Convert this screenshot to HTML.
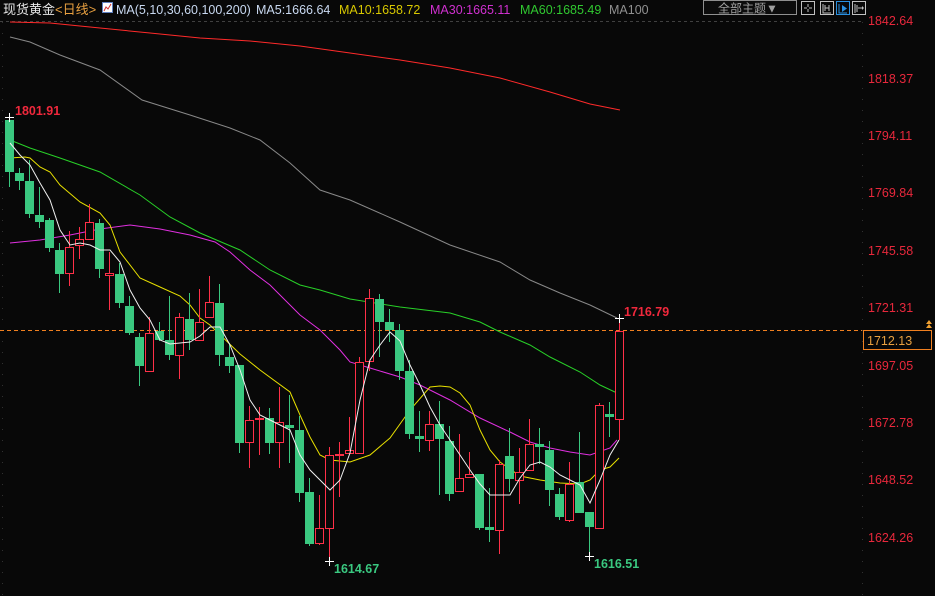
<!DOCTYPE html>
<html><head><meta charset="utf-8"><style>
html,body{margin:0;padding:0;background:#080808;width:935px;height:596px;overflow:hidden}
svg{display:block}
text{font-family:"Liberation Sans","Noto Sans CJK SC",sans-serif}
</style></head><body>
<svg width="935" height="596" viewBox="0 0 935 596" xmlns="http://www.w3.org/2000/svg">
<rect width="935" height="596" fill="#080808"/>
<!-- header -->
<text x="3" y="14" font-size="13" fill="#e8e8e8">现货黄金<tspan fill="#e8a040">&lt;日线&gt;</tspan></text>
<rect x="102.5" y="2.5" width="10" height="10" fill="#fff" stroke="#6080c0"/>
<polyline points="104,11 106,7 108,9 111,4" fill="none" stroke="#d03030" stroke-width="1"/>
<text x="116" y="14" font-size="12.5" fill="#c8d8f0">MA(5,10,30,60,100,200)</text>
<text x="256" y="14" font-size="12.5" fill="#c8d8f0">MA5:1666.64</text>
<text x="339" y="14" font-size="12.5" fill="#d8c800">MA10:1658.72</text>
<text x="430" y="14" font-size="12.5" fill="#d030d0">MA30:1665.11</text>
<text x="520" y="14" font-size="12.5" fill="#30c830">MA60:1685.49</text>
<text x="609" y="14" font-size="12.5" fill="#909090">MA100</text>
<rect x="703.5" y="0.5" width="93" height="14" fill="#0c0c0c" stroke="#909090"/>
<text x="718" y="12.5" font-size="12" fill="#a0a0a0">全部主题▼</text>
<g fill="none" stroke="#c0c0c0">
<rect x="801.5" y="1.5" width="13" height="13"/><rect x="820.5" y="1.5" width="13" height="13"/>
<rect x="836.5" y="1.5" width="13" height="13" stroke="#2a90e0"/><rect x="852.5" y="1.5" width="13" height="13"/>
<path d="M808 4v3M808 9v3M804 8h3M809 8h3"/>
<path d="M823 4v9h8M825 5v6M829 5v6M825 8h4"/>
<path d="M839 4v9h8" stroke="#2a90e0"/>
<path d="M855 4v9M857 5v7M858 8h5"/>
</g>
<path d="M842 5l5 3.5-5 3.5z" fill="#2a90e0"/>
<path d="M862 6l2 2-2 2z" fill="#c0c0c0"/>
<!-- grid/axes -->
<line x1="0" y1="21.5" x2="862" y2="21.5" stroke="#404040" stroke-dasharray="3,3"/>
<line x1="2.5" y1="22" x2="2.5" y2="596" stroke="#303030" stroke-dasharray="1,10"/>
<line x1="862.5" y1="22" x2="862.5" y2="596" stroke="#303030" stroke-dasharray="1,10"/>
<g font-size="12.5" fill="#e8283c">
<text x="868" y="25">1842.64</text><text x="868" y="83">1818.37</text><text x="868" y="140">1794.11</text>
<text x="868" y="197">1769.84</text><text x="868" y="255">1745.58</text><text x="868" y="312">1721.31</text>
<text x="868" y="370">1697.05</text><text x="868" y="427">1672.78</text><text x="868" y="484">1648.52</text>
<text x="868" y="542">1624.26</text>
</g>
<line x1="0" y1="330.5" x2="862" y2="330.5" stroke="#f08020" stroke-dasharray="4,3"/>
<rect x="863.5" y="330.5" width="68" height="19" fill="#080808" stroke="#f08020"/>
<text x="867" y="345" font-size="12.5" fill="#e8a040">1712.13</text>
<path d="M926 328l3-4 3 4zM926 324l3-4 3 4z" fill="#f0a030"/>
<!-- MAs -->
<g fill="none" stroke-width="1">
<polyline stroke="#ff2a2a" points="10,22 50,23 100,28 150,33 200,38 250,41 300,46 350,53 400,60 450,68 500,78 550,92 590,104 620,110"/>
<polyline stroke="#888" points="10,37 30,42 60,55 100,70 142,100 190,115 230,128 260,140 290,163 320,190 350,200 400,222 450,245 500,262 530,280 560,293 590,305 617,318"/>
<polyline stroke="#28d028" points="10,140 30,148 60,158 100,172 140,195 170,217 200,233 240,250 270,270 300,285 320,290 350,299 400,307 450,313 480,322 500,332 530,345 550,357 580,372 600,385 617,393"/>
<polyline stroke="#e030e0" points="10,243 40,240 70,235 100,229 130,225 160,229 190,235 215,242 230,252 250,270 270,285 300,315 320,330 340,350 350,362 370,368 400,377 420,385 450,400 480,418 510,432 530,442 550,448 570,452 590,455 610,448 617,440"/>
<polyline stroke="#e8e000" points="10,158 25,157 30,158 40,167 50,172 60,185 80,202 100,213 110,225 120,252 140,278 160,287 180,296 190,305 200,318 210,325 240,354 260,370 290,392 300,415 310,437 320,455 330,460 350,462 370,455 390,438 410,410 430,387 440,386 450,387 460,393 470,405 480,430 490,450 500,462 520,476 540,480 560,483 580,484 590,480 600,470 610,467 619,458"/>
</g>
<!-- candles -->
<g id="c" stroke-width="1" shape-rendering="crispEdges">
<g stroke="#3ac880" fill="#3ac880">
<line x1="9.5" y1="117" x2="9.5" y2="187"/><rect x="5" y="120" width="9" height="52" stroke="none"/>
<line x1="19.5" y1="168" x2="19.5" y2="190"/><rect x="15" y="173" width="9" height="8" stroke="none"/>
<line x1="29.5" y1="160" x2="29.5" y2="218"/><rect x="25" y="181" width="9" height="33" stroke="none"/>
<line x1="39.5" y1="187" x2="39.5" y2="228"/><rect x="35" y="215" width="9" height="7" stroke="none"/>
<line x1="49.5" y1="218" x2="49.5" y2="252"/><rect x="45" y="220" width="9" height="28" stroke="none"/>
<line x1="59.5" y1="243" x2="59.5" y2="293"/><rect x="55" y="250" width="9" height="24" stroke="none"/>
<line x1="99.5" y1="219" x2="99.5" y2="278"/><rect x="95" y="223" width="9" height="46" stroke="none"/>
<line x1="119.5" y1="263" x2="119.5" y2="308"/><rect x="115" y="274" width="9" height="29" stroke="none"/>
<line x1="129.5" y1="296" x2="129.5" y2="335"/><rect x="125" y="306" width="9" height="27" stroke="none"/>
<line x1="139.5" y1="333" x2="139.5" y2="386"/><rect x="135" y="337" width="9" height="29" stroke="none"/>
<line x1="159.5" y1="322" x2="159.5" y2="341"/><rect x="155" y="331" width="9" height="9" stroke="none"/>
<line x1="169.5" y1="296" x2="169.5" y2="360"/><rect x="165" y="340" width="9" height="15" stroke="none"/>
<line x1="189.5" y1="293" x2="189.5" y2="350"/><rect x="185" y="319" width="9" height="21" stroke="none"/>
<line x1="219.5" y1="284" x2="219.5" y2="366"/><rect x="215" y="303" width="9" height="52" stroke="none"/>
<line x1="229.5" y1="343" x2="229.5" y2="373"/><rect x="225" y="357" width="9" height="9" stroke="none"/>
<line x1="239.5" y1="365" x2="239.5" y2="453"/><rect x="235" y="365" width="9" height="78" stroke="none"/>
<line x1="269.5" y1="408" x2="269.5" y2="454"/><rect x="265" y="418" width="9" height="25" stroke="none"/>
<line x1="289.5" y1="395" x2="289.5" y2="463"/><rect x="285" y="425" width="9" height="3" stroke="none"/>
<line x1="299.5" y1="416" x2="299.5" y2="502"/><rect x="295" y="430" width="9" height="63" stroke="none"/>
<line x1="309.5" y1="478" x2="309.5" y2="546"/><rect x="305" y="492" width="9" height="52" stroke="none"/>
<line x1="379.5" y1="294" x2="379.5" y2="357"/><rect x="375" y="299" width="9" height="23" stroke="none"/>
<line x1="389.5" y1="309" x2="389.5" y2="342"/><rect x="385" y="322" width="9" height="8" stroke="none"/>
<line x1="399.5" y1="324" x2="399.5" y2="380"/><rect x="395" y="330" width="9" height="41" stroke="none"/>
<line x1="409.5" y1="360" x2="409.5" y2="439"/><rect x="405" y="371" width="9" height="63" stroke="none"/>
<line x1="419.5" y1="411" x2="419.5" y2="452"/><rect x="415" y="436" width="9" height="3" stroke="none"/>
<line x1="439.5" y1="401" x2="439.5" y2="495"/><rect x="435" y="424" width="9" height="15" stroke="none"/>
<line x1="449.5" y1="426" x2="449.5" y2="501"/><rect x="445" y="441" width="9" height="53" stroke="none"/>
<line x1="479.5" y1="474" x2="479.5" y2="530"/><rect x="475" y="474" width="9" height="54" stroke="none"/>
<line x1="489.5" y1="488" x2="489.5" y2="542"/><rect x="485" y="527" width="9" height="3" stroke="none"/>
<line x1="509.5" y1="428" x2="509.5" y2="492"/><rect x="505" y="456" width="9" height="23" stroke="none"/>
<line x1="539.5" y1="428" x2="539.5" y2="464"/><rect x="535" y="444" width="9" height="3" stroke="none"/>
<line x1="549.5" y1="441" x2="549.5" y2="506"/><rect x="545" y="450" width="9" height="40" stroke="none"/>
<line x1="559.5" y1="488" x2="559.5" y2="520"/><rect x="555" y="494" width="9" height="23" stroke="none"/>
<line x1="579.5" y1="432" x2="579.5" y2="513"/><rect x="575" y="482" width="9" height="31" stroke="none"/>
<line x1="589.5" y1="512" x2="589.5" y2="556"/><rect x="585" y="512" width="9" height="15" stroke="none"/>
<line x1="609.5" y1="402" x2="609.5" y2="437"/><rect x="605" y="414" width="9" height="3" stroke="none"/>
</g>
<g stroke="#ff3048" fill="#080808" stroke-width="1.3">
<line x1="69.5" y1="231" x2="69.5" y2="286"/><rect x="65.5" y="247.5" width="8" height="26"/>
<line x1="79.5" y1="227" x2="79.5" y2="259"/><rect x="75.5" y="239.5" width="8" height="6"/>
<line x1="89.5" y1="204" x2="89.5" y2="240"/><rect x="85.5" y="222.5" width="8" height="17"/>
<line x1="109.5" y1="252" x2="109.5" y2="310"/><rect x="105.5" y="273.5" width="8" height="2"/>
<line x1="149.5" y1="317" x2="149.5" y2="372"/><rect x="145.5" y="333.5" width="8" height="38"/>
<line x1="179.5" y1="313" x2="179.5" y2="379"/><rect x="175.5" y="317.5" width="8" height="38"/>
<line x1="199.5" y1="289" x2="199.5" y2="341"/><rect x="195.5" y="322.5" width="8" height="18"/>
<line x1="209.5" y1="276" x2="209.5" y2="318"/><rect x="205.5" y="302.5" width="8" height="15"/>
<line x1="249.5" y1="406" x2="249.5" y2="468"/><rect x="245.5" y="420.5" width="8" height="22"/>
<line x1="259.5" y1="407" x2="259.5" y2="455"/><rect x="255.5" y="418.5" width="8" height="1" fill="#ff3048"/>
<line x1="279.5" y1="387" x2="279.5" y2="468"/><rect x="275.5" y="422.5" width="8" height="20"/>
<line x1="319.5" y1="495" x2="319.5" y2="545"/><rect x="315.5" y="528.5" width="8" height="15"/>
<line x1="329.5" y1="447" x2="329.5" y2="562"/><rect x="325.5" y="455.5" width="8" height="73"/>
<line x1="339.5" y1="442" x2="339.5" y2="497"/><rect x="335.5" y="454.5" width="8" height="1" fill="#ff3048"/>
<line x1="349.5" y1="417" x2="349.5" y2="453"/><rect x="345.5" y="450.5" width="8" height="3"/>
<line x1="359.5" y1="357" x2="359.5" y2="454"/><rect x="355.5" y="362.5" width="8" height="91"/>
<line x1="369.5" y1="289" x2="369.5" y2="371"/><rect x="365.5" y="298.5" width="8" height="63"/>
<line x1="429.5" y1="411" x2="429.5" y2="451"/><rect x="425.5" y="424.5" width="8" height="16"/>
<line x1="459.5" y1="434" x2="459.5" y2="492"/><rect x="455.5" y="478.5" width="8" height="13"/>
<line x1="469.5" y1="452" x2="469.5" y2="477"/><rect x="465.5" y="474.5" width="8" height="3"/>
<line x1="499.5" y1="460" x2="499.5" y2="554"/><rect x="495.5" y="464.5" width="8" height="66"/>
<line x1="519.5" y1="448" x2="519.5" y2="504"/><rect x="515.5" y="472.5" width="8" height="8"/>
<line x1="529.5" y1="419" x2="529.5" y2="470"/><rect x="525.5" y="444.5" width="8" height="26"/>
<line x1="569.5" y1="462" x2="569.5" y2="522"/><rect x="565.5" y="484.5" width="8" height="36"/>
<line x1="599.5" y1="403" x2="599.5" y2="528"/><rect x="595.5" y="405.5" width="8" height="123"/>
<line x1="619.5" y1="319" x2="619.5" y2="440"/><rect x="615.5" y="331.5" width="8" height="88"/>
</g>
</g>
<polyline fill="none" stroke="#f0f0f0" points="10,143 20,155 30,165 40,183 50,200 60,230 70,245 80,243 90,245 100,250 110,250 120,262 130,290 140,308 150,320 160,340 170,344 180,343 190,342 200,336 210,327 220,327 230,345 240,370 250,400 260,415 270,420 280,425 290,430 300,455 310,470 320,480 330,490 340,480 350,453 360,400 370,360 380,345 390,332 400,341 410,365 420,385 430,407 440,425 450,440 460,455 470,470 480,484 490,495 500,495 510,495 520,478 530,465 540,462 550,467 560,475 570,480 580,485 590,503 600,480 610,455 619,440"/>
<g stroke="#fff"><path d="M5 117.5h9M9.5 113v9M325 561.5h9M329.5 557v9M585 556.5h9M589.5 552v9M615 318.5h9M619.5 314v9"/></g>
<g font-size="12.5" font-weight="bold">
<text x="15" y="115" fill="#f0283c">1801.91</text>
<text x="624" y="316" fill="#f0283c">1716.79</text>
<text x="334" y="573" fill="#3ac880">1614.67</text>
<text x="594" y="568" fill="#3ac880">1616.51</text>
</g>
</svg>
</body></html>
